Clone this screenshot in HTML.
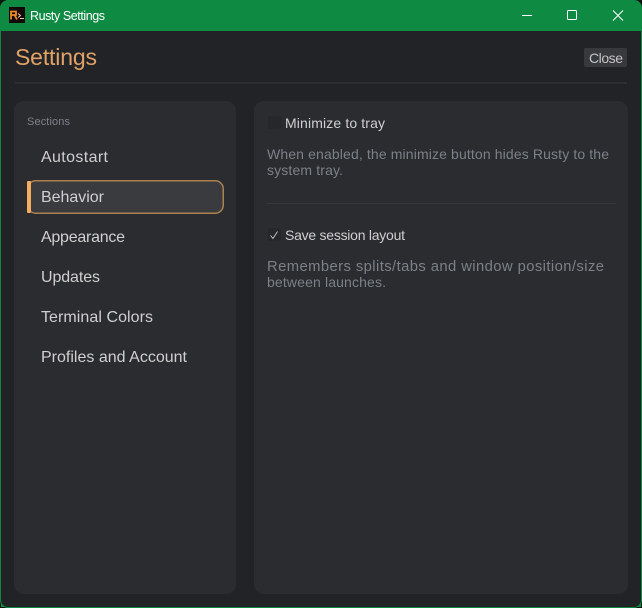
<!DOCTYPE html>
<html><head><meta charset="utf-8"><title>Rusty Settings</title>
<style>
html,body{margin:0;padding:0;width:642px;height:608px;overflow:hidden;background:#101a14}
svg{display:block}
text{font-family:"Liberation Sans",sans-serif}
</style></head><body>
<svg width="642" height="608" viewBox="0 0 642 608" xmlns="http://www.w3.org/2000/svg">
<rect width="642" height="608" fill="#0e1512"/>
<rect x="0" y="0" width="642" height="608" rx="8" fill="#0f8a43"/>
<rect x="1" y="31" width="640" height="576" fill="#222327"/>
<path d="M1 600v7h7a7 7 0 0 1-7-7zM641 600v7h-7a7 7 0 0 0 7-7z" fill="#0f8a43"/>
<!-- app icon -->
<rect x="9" y="7" width="16" height="16" fill="#120806"/>
<path d="M11 19.500V11.500h5v3.500h-4.500M14.500 15l2.500 4.500" fill="none" stroke="#f08a24" stroke-width="1.800"/>
<path d="M18 13.500l2.500 2-2.500 2M20 18.500h4" fill="none" stroke="#f3c9a0" stroke-width="1"/>
<text x="30" y="20" font-size="12.500" fill="#ffffff" textLength="75" lengthAdjust="spacing">Rusty Settings</text>
<!-- window controls -->
<rect x="522" y="15" width="10" height="1" fill="#ffffff"/>
<rect x="567.500" y="10.500" width="9" height="9" rx="1" fill="none" stroke="#ffffff" stroke-width="1"/>
<path d="M613 10.500l10 10M623 10.500l-10 10" stroke="#ffffff" stroke-width="1" fill="none"/>
<!-- header -->
<text x="15" y="65" font-size="23" fill="#e0a266" textLength="82" lengthAdjust="spacing">Settings</text>
<rect x="584" y="48" width="43" height="19" rx="2" fill="#38393d"/>
<text x="589" y="63" font-size="14" fill="#c4c4c4" textLength="34" lengthAdjust="spacing">Close</text>
<rect x="15" y="82" width="612" height="2" fill="#2d2e31"/>
<!-- left panel -->
<rect x="14" y="101" width="222" height="493" rx="10" fill="#2b2c30"/>
<text x="27" y="125" font-size="11" fill="#7d8288" textLength="43" lengthAdjust="spacing">Sections</text>
<text x="41" y="162" font-size="16" fill="#cfcfcf" textLength="67" lengthAdjust="spacing">Autostart</text>
<rect x="27.750" y="180.750" width="195.500" height="32.500" rx="8" fill="#3a3b3f" stroke="#ab8150" stroke-width="1.500"/>
<rect x="27" y="181" width="4" height="32" rx="1" fill="#f5ae5f"/>
<text x="41" y="202" font-size="16" fill="#cfcfcf" textLength="63" lengthAdjust="spacing">Behavior</text>
<text x="41" y="242" font-size="16" fill="#cfcfcf" textLength="84" lengthAdjust="spacing">Appearance</text>
<text x="41" y="282" font-size="16" fill="#cfcfcf" textLength="59" lengthAdjust="spacing">Updates</text>
<text x="41" y="322" font-size="16" fill="#cfcfcf" textLength="112" lengthAdjust="spacing">Terminal Colors</text>
<text x="41" y="362" font-size="16" fill="#cfcfcf" textLength="146" lengthAdjust="spacing">Profiles and Account</text>
<!-- right panel -->
<rect x="254" y="101" width="374" height="493" rx="10" fill="#2b2c30"/>
<rect x="268" y="116" width="13" height="13" rx="2" fill="#26272b"/>
<text x="285" y="128" font-size="14" fill="#cfcfcf" textLength="100" lengthAdjust="spacing">Minimize to tray</text>
<text x="267" y="159" font-size="14" fill="#7b8188" textLength="342" lengthAdjust="spacing">When enabled, the minimize button hides Rusty to the</text>
<text x="267" y="175" font-size="14" fill="#7b8188" textLength="76" lengthAdjust="spacing">system tray.</text>
<rect x="267" y="203" width="349" height="1" fill="#37383c"/>
<rect x="268" y="228" width="13" height="13" rx="2" fill="#26272b"/>
<path d="M270.500 235.500l2.500 3 4.500-7" fill="none" stroke="#c8c8c8" stroke-width="0.900"/>
<text x="285" y="240" font-size="14" fill="#cfcfcf" textLength="120" lengthAdjust="spacing">Save session layout</text>
<text x="267" y="271" font-size="14.800" fill="#7b8188" textLength="337" lengthAdjust="spacing">Remembers splits/tabs and window position/size</text>
<text x="267" y="287" font-size="14" fill="#7b8188" textLength="119" lengthAdjust="spacing">between launches.</text>
</svg>
</body></html>
